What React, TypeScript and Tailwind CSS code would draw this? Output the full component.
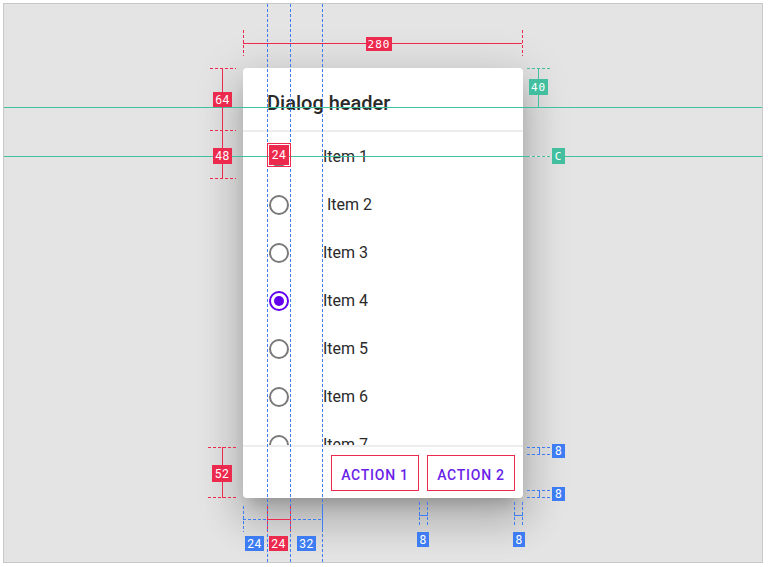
import React from 'react'

const items = [
  { label: 'Item 1', checked: false, shift: false },
  { label: 'Item 2', checked: false, shift: true },
  { label: 'Item 3', checked: false, shift: false },
  { label: 'Item 4', checked: true, shift: false },
  { label: 'Item 5', checked: false, shift: false },
  { label: 'Item 6', checked: false, shift: false },
  { label: 'Item 7', checked: false, shift: false },
]

const RED = '#ec2a4d'
const BLUE = '#3d7cf2'
const GREEN = '#43bf9f'

function Radio({ checked }: { checked: boolean }) {
  return (
    <div className="flex h-6 w-6 shrink-0 items-center justify-center">
      {checked ? (
        <div className="flex h-5 w-5 items-center justify-center rounded-full border-2 border-[#6200ee]">
          <div className="h-2.5 w-2.5 rounded-full bg-[#6200ee]" />
        </div>
      ) : (
        <div className="h-5 w-5 rounded-full border-2 border-[#7a7a7a]" />
      )}
    </div>
  )
}

function Dialog() {
  return (
    <div className="flex h-[430px] w-[280px] flex-col overflow-hidden rounded bg-white shadow-[0_11px_15px_-7px_rgba(0,0,0,0.2),0_24px_38px_3px_rgba(0,0,0,0.14),0_9px_46px_8px_rgba(0,0,0,0.12)]">
      {/* header */}
      <div className="h-16 shrink-0 border-b-2 border-[#ededed] px-6 pt-[23px]">
        <h2 className="text-[20px] leading-6 font-medium text-[#2a2a2a]">Dialog header</h2>
      </div>

      {/* scrolling list */}
      <div className="flex-1 overflow-hidden pt-px">
        {items.map((it) => (
          <div key={it.label} className="flex h-12 items-center pl-6">
            <Radio checked={it.checked} />
            <span
              className={
                it.shift
                  ? 'ml-9 text-[16px] leading-6 text-[#2a2a2a]'
                  : 'ml-8 text-[16px] leading-6 text-[#2a2a2a]'
              }
            >
              {it.label}
            </span>
          </div>
        ))}
      </div>

      {/* actions */}
      <div className="flex h-[53px] shrink-0 items-center justify-end gap-2 border-t-2 border-[#ededed] pr-2">
        <button className="h-9 w-[88px] border border-[#ec2a4d] pt-[5px] text-[14px] leading-5 font-medium tracking-[0.75px] text-[#6a1fe8]">
          ACTION 1
        </button>
        <button className="h-9 w-[88px] border border-[#ec2a4d] pt-[5px] text-[14px] leading-5 font-medium tracking-[0.75px] text-[#6a1fe8]">
          ACTION 2
        </button>
      </div>
    </div>
  )
}

// dimension lines drawn over the mock
function Redlines() {
  const dash = '3 2'
  return (
    <svg
      className="pointer-events-none absolute top-0 left-0"
      width={768}
      height={567}
      viewBox="0 0 768 567"
      shapeRendering="crispEdges"
    >
      {/* keylines */}
      <g stroke={BLUE} strokeDasharray={dash}>
        <line x1={267.5} y1={4} x2={267.5} y2={562} />
        <line x1={290.5} y1={4} x2={290.5} y2={562} />
        <line x1={322.5} y1={4} x2={322.5} y2={562} />
      </g>
      <g stroke={GREEN}>
        <line x1={4} y1={107.5} x2={762} y2={107.5} />
        <line x1={4} y1={156.5} x2={762} y2={156.5} />
      </g>

      {/* 280 */}
      <g stroke={RED}>
        <line x1={243} y1={43.5} x2={522} y2={43.5} />
        <line x1={243.5} y1={30} x2={243.5} y2={56} strokeDasharray={dash} />
        <line x1={522.5} y1={30} x2={522.5} y2={56} strokeDasharray={dash} />
      </g>

      {/* 64 / 48 */}
      <g stroke={RED}>
        <line x1={222.5} y1={68} x2={222.5} y2={178} />
        <line x1={210} y1={68.5} x2={236} y2={68.5} strokeDasharray={dash} />
        <line x1={210} y1={130.5} x2={236} y2={130.5} strokeDasharray={dash} />
        <line x1={210} y1={178.5} x2={236} y2={178.5} strokeDasharray={dash} />
      </g>

      {/* 40 and centre */}
      <g stroke={GREEN}>
        <line x1={538.5} y1={68} x2={538.5} y2={107} />
        <line x1={527} y1={68.5} x2={552} y2={68.5} strokeDasharray={dash} />
        <line x1={527} y1={107.5} x2={552} y2={107.5} strokeDasharray={dash} />
      </g>
      <line x1={527} y1={156.5} x2={552} y2={156.5} stroke="#e4e4e4" />
      <line x1={527} y1={156.5} x2={552} y2={156.5} stroke={GREEN} strokeDasharray={dash} />

      {/* radio 24 */}
      <rect x={267.5} y={143.5} width={23} height={23} fill="none" stroke={RED} />

      {/* 52 */}
      <g stroke={RED}>
        <line x1={222.5} y1={447} x2={222.5} y2={498} />
        <line x1={208} y1={447.5} x2={236} y2={447.5} strokeDasharray={dash} />
        <line x1={208} y1={497.5} x2={236} y2={497.5} strokeDasharray={dash} />
      </g>

      {/* right 8s */}
      <g stroke={BLUE}>
        <line x1={527} y1={447.5} x2={552} y2={447.5} strokeDasharray={dash} />
        <line x1={527} y1={454.5} x2={552} y2={454.5} strokeDasharray={dash} />
        <line x1={539.5} y1={447} x2={539.5} y2={455} />
        <line x1={527} y1={490.5} x2={552} y2={490.5} strokeDasharray={dash} />
        <line x1={527} y1={497.5} x2={552} y2={497.5} strokeDasharray={dash} />
        <line x1={539.5} y1={490} x2={539.5} y2={498} />
      </g>

      {/* bottom 24 / 24 / 32 */}
      <g stroke={BLUE} strokeDasharray={dash}>
        <line x1={243} y1={519.5} x2={322} y2={519.5} />
        <line x1={243.5} y1={506} x2={243.5} y2={532} />
        <line x1={322.5} y1={506} x2={322.5} y2={532} />
      </g>
      <g stroke={RED}>
        <line x1={267} y1={519.5} x2={291} y2={519.5} />
        <line x1={267.5} y1={506} x2={267.5} y2={532} strokeDasharray={dash} />
        <line x1={290.5} y1={506} x2={290.5} y2={532} strokeDasharray={dash} />
      </g>

      {/* bottom 8s */}
      <g stroke={BLUE}>
        <line x1={419.5} y1={502} x2={419.5} y2={527} strokeDasharray={dash} />
        <line x1={427.5} y1={502} x2={427.5} y2={527} strokeDasharray={dash} />
        <line x1={419} y1={515.5} x2={428} y2={515.5} />
        <line x1={514.5} y1={502} x2={514.5} y2={527} strokeDasharray={dash} />
        <line x1={522.5} y1={502} x2={522.5} y2={527} strokeDasharray={dash} />
        <line x1={514} y1={515.5} x2={523} y2={515.5} />
      </g>
    </svg>
  )
}

// measurement tags, laid over the dialog
function Labels() {
  const base = "absolute flex items-center justify-center text-white font-['Roboto',sans-serif] text-[12px] leading-none tracking-[0.5px]"
  const mono = "absolute flex items-center justify-center text-white font-['DejaVu_Sans_Mono',monospace] text-[11px] leading-none tracking-[1px]"
  return (
    <>
      <div className={`${mono} left-[366px] top-[37px] h-[14px] w-[26px] bg-[#ec2a4d]`}>280</div>
      <div className={`${base} left-[213px] top-[92px] h-[15px] w-[19px] bg-[#ec2a4d]`}>64</div>
      <div className={`${base} left-[213px] top-[148px] h-[16px] w-[19px] bg-[#ec2a4d]`}>48</div>
      <div className={`${base} left-[269px] top-[145px] h-[20px] w-[20px] bg-[#ec2a4d]`}>24</div>
      <div className={`${mono} left-[529px] top-[79px] h-[16px] w-[19px] bg-[#43bf9f]`}>40</div>
      <div className={`${mono} left-[552px] top-[148px] h-[16px] w-[13px] bg-[#43bf9f]`}>C</div>
      <div className={`${base} left-[212px] top-[465px] h-[17px] w-[20px] bg-[#ec2a4d]`}>52</div>
      <div className={`${base} left-[552px] top-[444px] h-[14px] w-[13px] bg-[#3d7cf2]`}>8</div>
      <div className={`${base} left-[552px] top-[487px] h-[14px] w-[13px] bg-[#3d7cf2]`}>8</div>
      <div className={`${base} left-[245px] top-[536px] h-[15px] w-[19px] bg-[#3d7cf2]`}>24</div>
      <div className={`${base} left-[269px] top-[536px] h-[15px] w-[19px] bg-[#ec2a4d]`}>24</div>
      <div className={`${base} left-[297px] top-[536px] h-[15px] w-[19px] bg-[#3d7cf2]`}>32</div>
      <div className={`${base} left-[417px] top-[532px] h-[15px] w-[12px] bg-[#3d7cf2]`}>8</div>
      <div className={`${base} left-[513px] top-[532px] h-[15px] w-[12px] bg-[#3d7cf2]`}>8</div>
    </>
  )
}

export default function App() {
  return (
    <div className="relative h-[567px] w-[768px] overflow-hidden bg-white font-['Roboto',sans-serif]">
      <div className="mt-[3px] ml-[3px] flex h-[560px] w-[760px] items-center justify-center border border-[#c9c9c9] bg-[#e4e4e4]">
        <Dialog />
      </div>
      <Redlines />
      <Labels />
    </div>
  )
}
